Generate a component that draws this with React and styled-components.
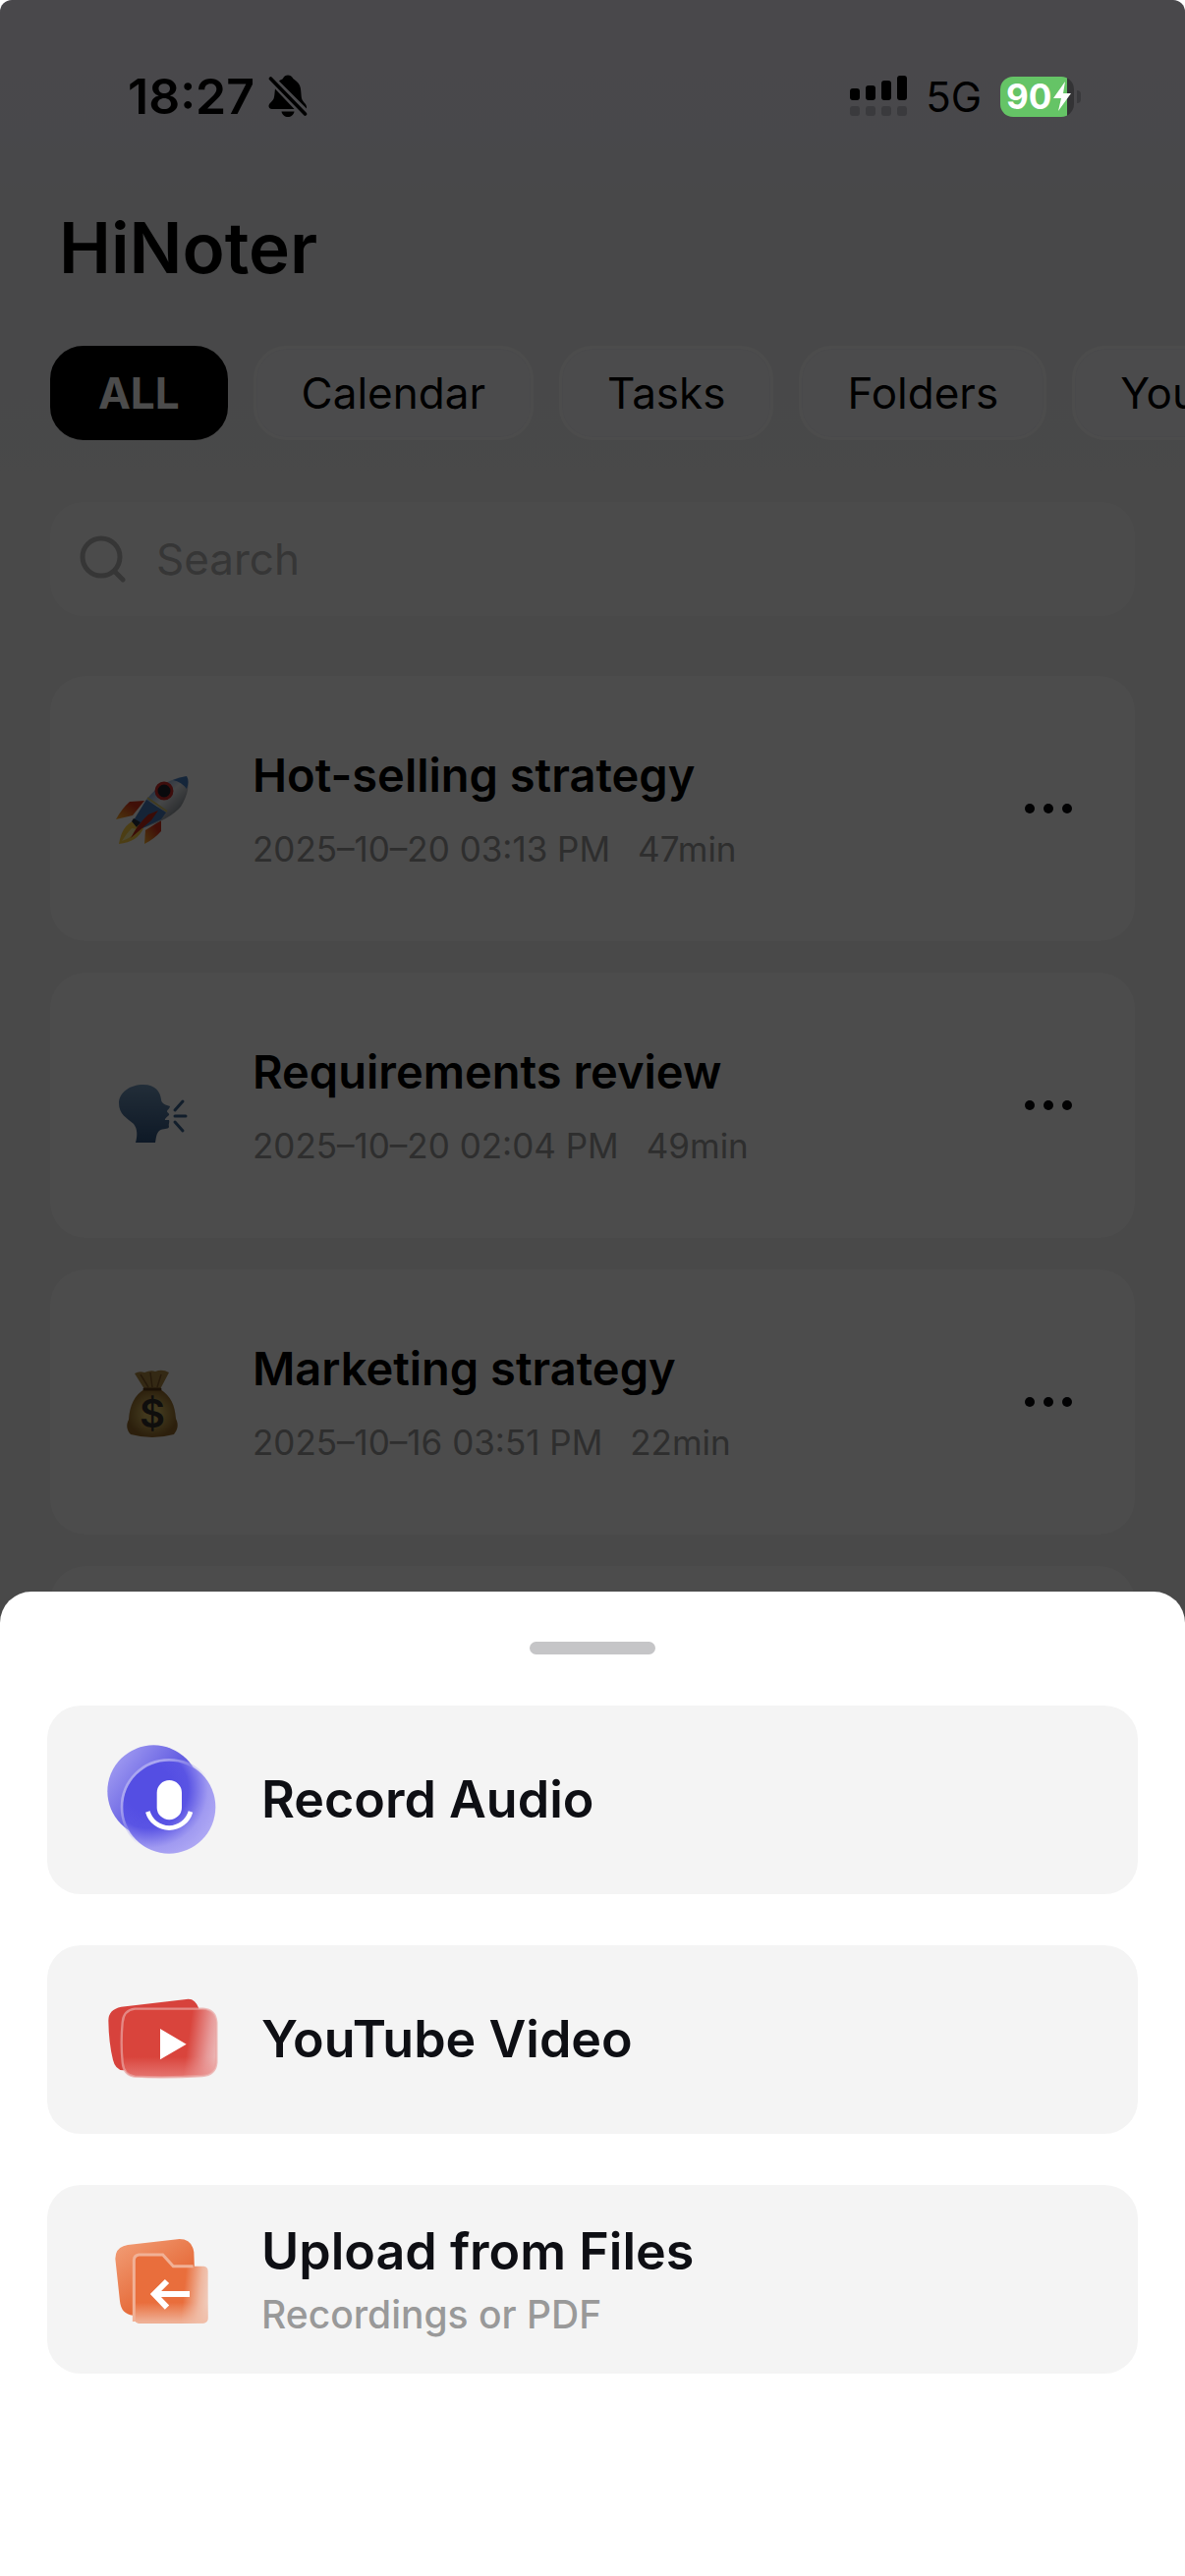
import styled, { createGlobalStyle } from "styled-components";

const GlobalStyle = createGlobalStyle`
  * {
    box-sizing: border-box;
  }
  body {
    margin: 0;
    background: #ffffff;
    font-family: Inter, "Liberation Sans", sans-serif;
    color: #000000;
  }
  button, input {
    font: inherit;
    color: inherit;
    border: none;
    background: none;
    padding: 0;
    margin: 0;
  }
`;

const tabs = ["ALL", "Calendar", "Tasks", "Folders", "YouTube"];

const BellOffIcon = () => (
  <svg width="40" height="44" viewBox="0 0 40 44" aria-hidden="true">
    <path d="M11 6.500C12.500 5 14.500 5 15.200 3.500C16 1.500 18 .5 20 .5S24 1.500 25 3.500C25.500 4.500 29 6 31.500 10C34 14 33 22 34.500 25.500C36 28.500 39 30 39 33V34.500Z" />
    <path d="M7 14.500L26.500 35H4C1.500 35 .5 33.500 .5 32C.5 29 4.500 27.500 5.700 24C6.500 21.500 6.500 18 7 14.500Z" />
    <path d="M13.500 37.500H26.500C26 41 23 43 20 43S14 41 13.500 37.500Z" />
    <path d="M2.500 4L37.500 40" stroke="#000000" strokeWidth="3.600" strokeLinecap="round" />
  </svg>
);

const SignalIcon = () => (
  <svg width="58" height="42" viewBox="0 0 58 42" aria-hidden="true">
    <rect x="0" y="13" width="10" height="12" rx="3" />
    <rect x="16" y="10" width="10" height="15" rx="3" />
    <rect x="32" y="5" width="10" height="20" rx="3" />
    <rect x="48" y="0" width="10" height="25" rx="3" />
    <g fill="#3a3a3d">
      <rect x="0" y="31" width="10" height="10" rx="3" />
      <rect x="16" y="31" width="10" height="10" rx="3" />
      <rect x="32" y="31" width="10" height="10" rx="3" />
      <rect x="48" y="31" width="10" height="10" rx="3" />
    </g>
  </svg>
);

const RocketIcon = () => (
  <svg width="80" height="80" viewBox="0 0 80 80" aria-hidden="true">
    <defs>
      <linearGradient id="rocketBody" x1="0" y1="0" x2="1" y2="1">
        <stop offset="0.25" stopColor="#5f95d8" />
        <stop offset="0.5" stopColor="#e8ebee" />
        <stop offset="0.8" stopColor="#7d858e" />
      </linearGradient>
      <linearGradient id="rocketFin" x1="1" y1="0" x2="0" y2="1">
        <stop offset="0.3" stopColor="#d8321c" />
        <stop offset="1" stopColor="#ffb52c" />
      </linearGradient>
    </defs>
    <path d="M32 32L17 33Q9 40 3 51L20 47Z" fill="url(#rocketFin)" />
    <path d="M49 52L49 63Q42 71 32 76L33 62Z" fill="url(#rocketFin)" />
    <path d="M22 52Q9 57 6 76Q25 74 31 60Z" fill="#ffcf45" />
    <path d="M19 60Q14 65 9 73Q21 69 25 61Z" fill="#fff0a0" />
    <path d="M21 52L34 31Q49 11 75 7Q80 20 69 38Q58 51 30 60Z" fill="url(#rocketBody)" />
    <path d="M61 11Q68 8 75 7Q78 12 75 20Q70 13 61 11Z" fill="#477fc4" />
    <path d="M34 31L54 44L49 51L30 60L21 52Z" fill="#4679b9" />
    <path d="M35 29L55 43" stroke="#d8c66d" strokeWidth="2" />
    <path d="M46 42L39 52L18 70Q25 56 36 46Z" fill="#c42a1a" />
    <path d="M21 50L28 54L24 59L19 53Z" fill="#27313d" />
    <ellipse cx="52" cy="22" rx="8" ry="8" fill="#20242c" stroke="#cc2c28" strokeWidth="3" />
  </svg>
);

const SpeakingIcon = () => (
  <svg width="80" height="80" viewBox="0 0 80 80" aria-hidden="true">
    <defs>
      <linearGradient id="headFill" x1="0" y1="0" x2="0" y2="1">
        <stop offset="0" stopColor="#7398bd" />
        <stop offset="1" stopColor="#2f5480" />
      </linearGradient>
    </defs>
    <path
      d="M31 19C43 19 48 26 49 34C49 38 54 40 58 41C58 43 55 45 55 46C55 48 58 48 57 50C56 51 52 54 53 55H57C58 57 56 59 57 62C56 65 51 63 47 66C44 69 44 73 43 78H23C25 71 25 64 21 59C14 53 6 49 6 38C6 27 17 19 31 19Z"
      fill="url(#headFill)"
    />
    <path d="M63 45L71 36M63 51H74M63 57L71 66" stroke="#3d648f" strokeWidth="3" strokeLinecap="round" />
  </svg>
);

const MoneyBagIcon = () => (
  <svg width="80" height="80" viewBox="0 0 80 80" aria-hidden="true">
    <defs>
      <radialGradient id="bagFill">
        <stop offset="0.3" stopColor="#d9bc63" />
        <stop offset="1" stopColor="#946a2a" />
      </radialGradient>
    </defs>
    <path d="M22 11Q27 8 32 10Q39 7 43 9Q50 6 57 10L48 27H32Z" fill="#b08a45" />
    <path d="M28 12L36 25M38 10L40 25M49 12L45 25" stroke="#7f5825" strokeWidth="1.500" />
    <path d="M32 27H48C59 34 63 43 64 57C67 63 66 68 62 73Q40 79 18 73C14 69 13 63 16 58C17 43 22 33 32 27Z" fill="url(#bagFill)" />
    <path d="M32 27H48" stroke="#5d3a14" strokeWidth="3" strokeLinecap="round" />
    <text x="40" y="66" textAnchor="middle" fontSize="40" fontWeight="600" fill="#33302e">$</text>
  </svg>
);

const RecordIcon = () => (
  <svg width="120" height="120" viewBox="72 68 360 360" aria-hidden="true">
    <defs>
      <linearGradient id="recBack" x1="0" y1="0.2" x2="0.8" y2="0.8">
        <stop offset="0" stopColor="#a29df2" />
        <stop offset="0.6" stopColor="#655fe2" />
      </linearGradient>
      <radialGradient id="recFront" gradientUnits="userSpaceOnUse" cx="215" cy="215" r="240">
        <stop offset="0.3" stopColor="#544ee3" />
        <stop offset="0.5" stopColor="#5a54e4" />
        <stop offset="0.75" stopColor="#a09af1" />
        <stop offset="1" stopColor="#b3adf5" />
      </radialGradient>
      <linearGradient id="recEdge" x1="0" y1="0" x2="1" y2="1">
        <stop offset="0.2" stopColor="#aaa6f0" />
        <stop offset="0.55" stopColor="#aaa6f0" stopOpacity="0" />
      </linearGradient>
    </defs>
    <circle cx="229" cy="222" r="141" fill="url(#recBack)" />
    <circle cx="276" cy="270" r="142" fill="url(#recFront)" />
    <circle cx="276" cy="270" r="144" fill="none" stroke="url(#recEdge)" strokeWidth="8" />
    <rect x="239" y="188" width="76" height="121" rx="38" fill="#ffffff" />
    <path d="M211 284A68 68 0 0 0 342 284" fill="none" stroke="#ffffff" strokeWidth="14" />
  </svg>
);

const VideoIcon = () => (
  <svg width="120" height="120" viewBox="72 50 360 360" aria-hidden="true">
    <defs>
      <linearGradient id="vidFront" x1="0" y1="0.4" x2="1" y2="0.5">
        <stop offset="0.7" stopColor="#d9443c" />
        <stop offset="0.92" stopColor="#e79a99" />
        <stop offset="1" stopColor="#ebb2b1" />
      </linearGradient>
      <linearGradient id="vidFade" x1="0" y1="0" x2="0" y2="1">
        <stop offset="0.7" stopColor="#ea8a86" stopOpacity="0" />
        <stop offset="1" stopColor="#ea8a86" stopOpacity="0.7" />
      </linearGradient>
    </defs>
    <path d="M130 130L335 106Q357 106 367 135L390 300L136 324Q112 322 105 292Q92 240 91 172Q91 138 130 130Z" fill="#d7423c" />
    <path d="M172 136H380Q418 138 421 178V300Q418 338 376 341Q270 348 172 343Q138 339 134 300Q128 240 134 178Q137 140 172 136Z" fill="url(#vidFront)" />
    <path d="M172 136H380Q418 138 421 178V300Q418 338 376 341Q270 348 172 343Q138 339 134 300Q128 240 134 178Q137 140 172 136Z" fill="url(#vidFade)" stroke="#e9a5a2" strokeOpacity="0.7" strokeWidth="7" />
    <path d="M249 197V291L329 244Z" fill="#ffffff" />
  </svg>
);

const FilesIcon = () => (
  <svg width="120" height="120" viewBox="72 63 360 360" aria-hidden="true">
    <defs>
      <linearGradient id="fileBack" x1="0" y1="0.1" x2="0.6" y2="0.9">
        <stop offset="0" stopColor="#f19b73" />
        <stop offset="0.8" stopColor="#e66c3b" />
      </linearGradient>
      <linearGradient id="fileFront" x1="0" y1="0.4" x2="1" y2="0.5">
        <stop offset="0.68" stopColor="#e96e3c" />
        <stop offset="0.9" stopColor="#efb79f" />
        <stop offset="1" stopColor="#f0c9b8" />
      </linearGradient>
      <linearGradient id="fileFade" x1="0" y1="0" x2="0" y2="1">
        <stop offset="0.7" stopColor="#f0bca6" stopOpacity="0" />
        <stop offset="1" stopColor="#f0bca6" stopOpacity="0.9" />
      </linearGradient>
    </defs>
    <path d="M150 138L308 120Q346 120 352 160L358 340L166 353Q130 350 126 310L112 180Q112 144 150 138Z" fill="url(#fileBack)" />
    <path d="M184 168H257L289 203H382Q395 204 395 218V362Q394 376 380 377H186Q170 376 169 360V184Q170 170 184 168Z" fill="url(#fileFront)" />
    <path d="M184 168H257L289 203H382Q395 204 395 218V362Q394 376 380 377H186Q170 376 169 360V184Q170 170 184 168Z" fill="url(#fileFade)" />
    <path d="M169 372V184Q170 170 184 168H257L289 203H350" fill="none" stroke="#f1b196" strokeWidth="9" />
    <path d="M339 288H232M270 249L231 288L270 329" fill="none" stroke="#ffffff" strokeWidth="18" />
  </svg>
);

const notes = [
  { title: "Hot-selling strategy", date: "2025–10–20 03:13 PM", length: "47min", icon: <RocketIcon /> },
  { title: "Requirements review", date: "2025–10–20 02:04 PM", length: "49min", icon: <SpeakingIcon /> },
  { title: "Marketing strategy", date: "2025–10–16 03:51 PM", length: "22min", icon: <MoneyBagIcon /> }
];

const options = [
  { title: "Record Audio", icon: <RecordIcon /> },
  { title: "YouTube Video", icon: <VideoIcon /> },
  { title: "Upload from Files", hint: "Recordings or PDF", icon: <FilesIcon /> }
];

const NoteCard = ({ title, date, length, icon }) => {
  return (
    <Card>
      {icon}
      <NoteText>
        <NoteTitle>{title}</NoteTitle>
        <NoteMeta>
          <span>{date}</span>
          <span>{length}</span>
        </NoteMeta>
      </NoteText>
      <MoreButton type="button" aria-label={`More for ${title}`}>
        <Dot />
        <Dot />
        <Dot />
      </MoreButton>
    </Card>
  );
};

const App = () => {
  return (
    <Screen>
      <GlobalStyle />
      <StatusBar>
        <StatusGroup $gap="14px">
          <Clock>18:27</Clock>
          <BellOffIcon />
        </StatusGroup>
        <StatusGroup $gap="19px">
          <SignalIcon />
          <Network>5G</Network>
          <Battery>
            <BatteryBody>
              90
              <svg width="18" height="30" viewBox="0 0 18 30" aria-hidden="true">
                <path d="M12 0L0 17H8L5 30L18 12H10Z" fill="#ffffff" />
              </svg>
            </BatteryBody>
            <BatteryTip />
          </Battery>
        </StatusGroup>
      </StatusBar>
      <Content>
        <AppTitle>HiNoter</AppTitle>
        <TabRow>
          {tabs.map((tab, i) => (
            <Tab key={tab} type="button" $active={i === 0}>
              {tab}
            </Tab>
          ))}
        </TabRow>
        <SearchBox>
          <svg width="48" height="48" viewBox="0 0 48 48" fill="none" stroke="#b4b4b4" strokeWidth="5" strokeLinecap="round" aria-hidden="true">
            <circle cx="22" cy="22" r="19" />
            <path d="M36 37L44 45" />
          </svg>
          <SearchInput type="search" placeholder="Search" aria-label="Search" />
        </SearchBox>
        <NoteList>
          {notes.map((note) => (
            <NoteCard key={note.title} {...note} />
          ))}
          <Card />
        </NoteList>
      </Content>
      <Scrim />
      <Sheet>
        <Handle />
        {options.map(({ title, hint, icon }) => (
          <Option key={title} type="button">
            {icon}
            <OptionText>
              <OptionTitle>{title}</OptionTitle>
              {hint && <OptionHint>{hint}</OptionHint>}
            </OptionText>
          </Option>
        ))}
      </Sheet>
    </Screen>
  );
};

const Screen = styled.div`
  position: relative;
  height: 100vh;
  overflow: hidden;
  border-radius: 12px 12px 0 0;
  background: linear-gradient(#f4f0fc 0, #f2f0fa 140px, #f0f2f5 210px, #f0f2f4 400px, #f3f3f3 480px);
`;

const StatusBar = styled.header`
  position: relative;
  z-index: 2;
  height: 196px;
  padding: 0 106px 0 130px;
  display: flex;
  align-items: center;
  justify-content: space-between;
`;

const StatusGroup = styled.div`
  display: flex;
  align-items: center;
  gap: ${({ $gap }) => $gap};
`;

const Clock = styled.time`
  font-size: 50px;
  font-weight: 600;
`;

const Network = styled.span`
  font-size: 42px;
`;

const Battery = styled.div`
  display: flex;
  align-items: center;
  gap: 3px;
`;

const BatteryBody = styled.div`
  width: 75px;
  height: 41px;
  padding-left: 6px;
  display: flex;
  align-items: center;
  gap: 2px;
  border-radius: 13px;
  background: linear-gradient(90deg, #65c466 68px, #333335 68px);
  color: #ffffff;
  font-size: 35px;
  font-weight: 700;
`;

const BatteryTip = styled.div`
  width: 4px;
  height: 13px;
  border-radius: 0 4px 4px 0;
  background: #39393c;
`;

const Content = styled.main`
  padding: 10px 51px 0;
`;

const AppTitle = styled.h1`
  margin: 0 9px;
  font-size: 71px;
  font-weight: 600;
  line-height: 92px;
`;

const TabRow = styled.nav`
  display: flex;
  gap: 26px;
  margin: 54px -51px 0 0;
  overflow: hidden;
`;

const Tab = styled.button`
  flex: none;
  height: 96px;
  padding: 0 46px;
  border: 3px solid ${({ $active }) => ($active ? "#000000" : "#ffffff")};
  border-radius: 34px;
  background: ${({ $active }) => ($active ? "#000000" : "#fbfbff")};
  box-shadow: inset 0 0 0 1px ${({ $active }) => ($active ? "#000000" : "#f6f6fa")};
  color: ${({ $active }) => ($active ? "#ffffff" : "#000000")};
  font-size: 44px;
  font-weight: ${({ $active }) => ($active ? 700 : 400)};
`;

const SearchBox = styled.label`
  display: flex;
  align-items: center;
  gap: 30px;
  height: 116px;
  margin-top: 63px;
  padding: 0 30px;
  border-radius: 34px;
  background: #fcfcfc;
`;

const SearchInput = styled.input`
  flex: 1;
  min-width: 0;
  outline: none;
  font-size: 44px;

  &::placeholder {
    color: #b4b4b4;
    opacity: 1;
  }
`;

const NoteList = styled.section`
  display: flex;
  flex-direction: column;
  gap: 32px;
  margin-top: 61px;
`;

const Card = styled.article`
  display: flex;
  align-items: center;
  gap: 62px;
  height: 270px;
  padding: 0 64px;
  border-radius: 36px;
  background: #fdfdfd;
`;

const NoteText = styled.div`
  flex: 1;
`;

const NoteTitle = styled.h2`
  margin: 0 0 24px;
  font-size: 47px;
  font-weight: 600;
  line-height: 58px;
`;

const NoteMeta = styled.div`
  display: flex;
  gap: 28px;
  font-size: 35px;
  line-height: 44px;
  color: #999999;
`;

const MoreButton = styled.button`
  display: flex;
  gap: 9px;
`;

const Dot = styled.i`
  width: 10px;
  height: 10px;
  border-radius: 50%;
  background: #08080c;
`;

const Scrim = styled.div`
  position: absolute;
  inset: 0;
  z-index: 1;
  background: rgba(0, 0, 0, 0.7);
`;

const Sheet = styled.section`
  position: absolute;
  left: 0;
  right: 0;
  bottom: 0;
  z-index: 3;
  display: flex;
  flex-direction: column;
  gap: 52px;
  padding: 51px 48px 206px;
  border-radius: 32px 32px 0 0;
  background: #ffffff;
`;

const Handle = styled.div`
  align-self: center;
  width: 128px;
  height: 13px;
  border-radius: 7px;
  background: #c5c5c7;
`;

const Option = styled.button`
  display: flex;
  align-items: center;
  gap: 42px;
  height: 192px;
  padding: 0 56px;
  border-radius: 34px;
  background: #f4f4f4;
  text-align: left;
`;

const OptionText = styled.span`
  display: flex;
  flex-direction: column;
  gap: 7px;
`;

const OptionTitle = styled.span`
  font-size: 52px;
  font-weight: 600;
  line-height: 64px;
  color: #0e0f14;
`;

const OptionHint = styled.span`
  font-size: 39px;
  font-weight: 500;
  line-height: 50px;
  color: #999999;
`;

export default App;
